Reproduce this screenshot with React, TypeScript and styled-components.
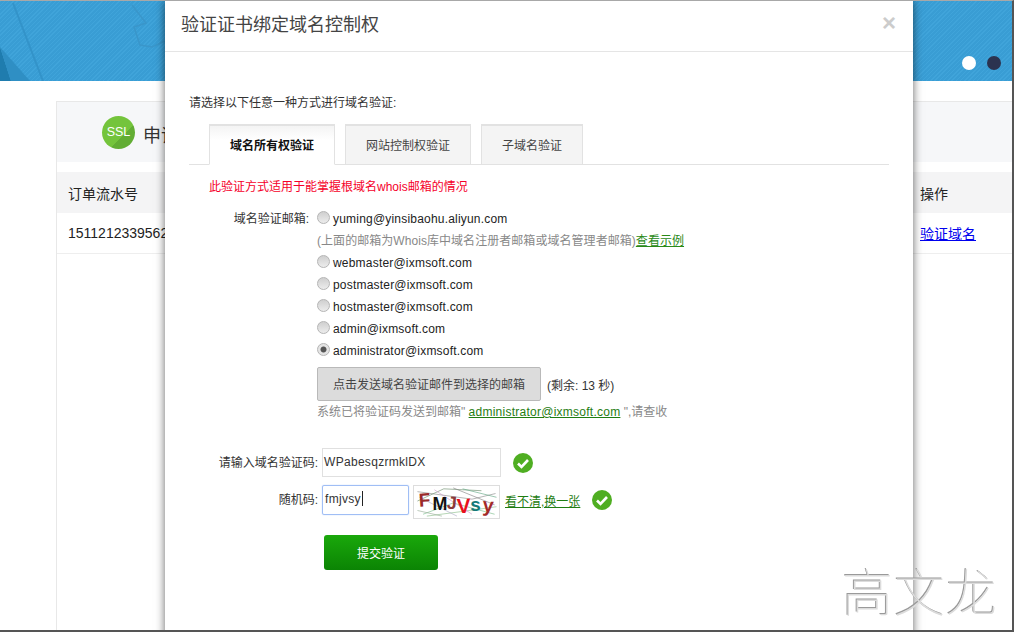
import React from 'react'
import styled, { createGlobalStyle } from 'styled-components'

const GlobalStyle = createGlobalStyle`
    html, body {
        margin: 0;
        padding: 0;
        background: #fff;
    }
    body {
        font-family: "Liberation Sans", Arial, "Noto Sans CJK SC", sans-serif;
        font-size: 12px;
        color: #333;
    }
    * { box-sizing: border-box; }
`

const Frame = styled.div`
    position: relative;
    width: 1014px;
    height: 632px;
    overflow: hidden;
    background: #fff;
    border-top: 1px solid #a8a8a8;
    border-right: 2px solid #555;
    border-bottom: 2px solid #555;
`

const Banner = styled.div`
    position: relative;
    height: 80px;
    overflow: hidden;
    background: repeating-linear-gradient(135deg, #40a4da 0 1px, #399dd4 1px 3px);
`

const BannerShade = styled.svg`
    position: absolute;
    left: 0;
    top: 0;
`

const Dots = styled.div`
    display: flex;
    justify-content: flex-end;
    gap: 11px;
    padding: 55px 11px 0 0;
`

const Dot = styled.span<{ dark?: boolean }>`
    position: relative;
    width: 14px;
    height: 14px;
    border-radius: 50%;
    background: ${props => props.dark ? '#2b3350' : '#fff'};
`

const Panel = styled.section`
    margin: 20px 0 0 56px;
    border: 1px solid #e8e8e8;
    border-right: none;
    border-bottom: none;
    height: 540px;
`

const PanelHead = styled.header`
    height: 60px;
    padding-left: 45px;
    display: flex;
    align-items: center;
    gap: 8px;
    background: #f6f7f9;
    font-size: 18px;
`

const PanelTitle = styled.span`
    margin-top: 3px;
`

const SslBadge = styled.span`
    width: 33px;
    height: 33px;
    border-radius: 50%;
    background: linear-gradient(135deg, #74c43c 62%, #62ad34 62%);
    color: #fff;
    font-size: 12.5px;
    line-height: 33px;
    text-align: center;
`

const TableRow = styled.div<{ head?: boolean }>`
    display: grid;
    grid-template-columns: 852px 1fr;
    align-items: center;
    padding-left: 11px;
    font-size: 14px;
    color: #222;
    height: 41px;
    margin-top: ${props => props.head ? '10px' : '0'};
    background: ${props => props.head ? '#f4f4f5' : '#fff'};
    border-bottom: ${props => props.head ? 'none' : '1px solid #eee'};
`

const TableLink = styled.a`
    color: #0000ee;
    text-decoration: underline;
`

const Modal = styled.div`
    position: absolute;
    left: 165px;
    top: 0;
    width: 748px;
    height: 640px;
    background: #fff;
    box-shadow: 0 0 9px rgba(0, 0, 0, .6);
`

const ModalHead = styled.div`
    height: 51px;
    padding: 0 17px 6px 16px;
    display: flex;
    align-items: center;
    justify-content: space-between;
    border-bottom: 1px solid #e5e5e5;
`

const ModalTitle = styled.h4`
    margin: 0;
    font-size: 18px;
    font-weight: 400;
    color: #444;
`

const Close = styled.span`
    font-size: 24px;
    font-weight: 700;
    line-height: 1;
    color: #ccc;
`

const ModalBody = styled.div`
    padding: 43px 24px 0;
`

const Intro = styled.p`
    margin: 0;
    height: 29px;
    line-height: 16px;
    color: #333;
`

const Tabs = styled.div`
    display: flex;
    gap: 10px;
    height: 41px;
    padding-left: 20px;
    border-bottom: 1px solid #e2e2e2;
`

const Tab = styled.div<{ active?: boolean; wide?: boolean }>`
    width: ${props => props.wide ? '126px' : '102px'};
    height: 41px;
    line-height: 41px;
    text-align: center;
    color: ${props => props.active ? '#111' : '#444'};
    font-weight: ${props => props.active ? 700 : 400};
    background: ${props => props.active ? 'linear-gradient(#f4f4f4, #fff 14px)' : '#f4f4f4'};
    border: 1px solid #e2e2e2;
    border-top: 2px solid #e2e2e2;
    border-bottom: ${props => props.active ? '1px solid #fff' : '1px solid #e2e2e2'};
`

const Warning = styled.p`
    margin: 0;
    padding-left: 20px;
    height: 43px;
    line-height: 45px;
    color: #f5002a;
`

const EmailGrid = styled.div`
    display: grid;
    grid-template-columns: 120px 1fr;
    column-gap: 8px;
`

const FieldLabel = styled.label`
    text-align: right;
    line-height: 22px;
    color: #333;
`

const EmailList = styled.div`
    display: flex;
    flex-direction: column;
`

const EmailRow = styled.div`
    display: flex;
    align-items: center;
    height: 22px;
    gap: 3px;
    color: #222;
    letter-spacing: .2px;
`

const Radio = styled.span<{ checked?: boolean }>`
    width: 13px;
    height: 13px;
    margin-top: -4px;
    border-radius: 50%;
    border: 1px solid #b5b5b5;
    background: ${props => props.checked
        ? 'radial-gradient(circle, #555 0 2.6px, #e4e4e4 3.4px)'
        : 'linear-gradient(#cfcfcf, #ececec)'};
`

const Hint = styled.div`
    height: 22px;
    line-height: 22px;
    color: #888;
    letter-spacing: .05px;
`

const HintLink = styled.a`
    color: #2a8a18;
    text-decoration: underline;
`

const SendRow = styled.div`
    display: flex;
    align-items: center;
    gap: 6px;
    margin-top: 5px;
    color: #333;
`

const SendButton = styled.button`
    width: 224px;
    height: 34px;
    padding: 0 0 2px;
    font: inherit;
    color: #444;
    background: #dcdcdc;
    border: 1px solid #b9b9b9;
    border-radius: 2px;
`

const Sent = styled.div`
    height: 22px;
    line-height: 22px;
    color: #888;
`

const SentLink = styled.a`
    color: #1f7d12;
    text-decoration: underline;
    letter-spacing: .25px;
`

const CodeRows = styled.div`
    display: flex;
    flex-direction: column;
    gap: 7px;
    margin-top: 25px;
`

const CodeRow = styled.div`
    display: flex;
    align-items: flex-start;
`

const CodeLabel = styled.label`
    width: 133px;
    text-align: right;
    line-height: 30px;
    color: #333;
    padding-right: 4px;
`

const TextBox = styled.div<{ focused?: boolean }>`
    width: ${props => props.focused ? '87px' : '179px'};
    height: ${props => props.focused ? '30px' : '29px'};
    line-height: 27px;
    padding-left: ${props => props.focused ? '2px' : '1px'};
    color: #333;
    letter-spacing: .3px;
    border: 1px solid ${props => props.focused ? '#a0bef5' : '#e0e0e0'};
    border-radius: ${props => props.focused ? '2px' : '0'};
    box-shadow: ${props => props.focused ? '0 0 1px #8fb2f2' : 'none'};
`

const Caret = styled.span`
    display: inline-block;
    width: 1px;
    height: 15px;
    margin-left: 1px;
    vertical-align: -3px;
    background: #222;
`

const CheckMark = styled.svg<{ gap: number }>`
    flex: none;
    margin: 5px 0 0 ${props => props.gap}px;
`

const Captcha = styled.svg`
    flex: none;
    margin-left: 4px;
    border: 1px solid #ddd;
`

const CaptchaLink = styled.a`
    margin-left: 5px;
    line-height: 34px;
    color: #1f7d12;
    text-decoration: underline;
`

const SubmitRow = styled.div`
    padding: 16px 0 0 135px;
`

const SubmitButton = styled.button`
    width: 114px;
    height: 35px;
    padding: 0;
    font: inherit;
    color: #fff;
    border: none;
    border-radius: 3px;
    background: linear-gradient(#1aa80b, #0b8404);
`

const Watermark = styled.div`
    position: absolute;
    left: 842px;
    top: 561px;
    font-family: "Noto Sans CJK SC", sans-serif;
    font-size: 51px;
    font-weight: 100;
    line-height: 56px;
    letter-spacing: 1px;
    color: #dcdcdc;
    text-shadow: -1px -1px 0 #9a9a9a;
`

const emails = [
    'webmaster@ixmsoft.com',
    'postmaster@ixmsoft.com',
    'hostmaster@ixmsoft.com',
    'admin@ixmsoft.com',
]

const captchaLetters = [
    { c: 'F', x: 4, y: 22, color: '#9a2a2a', size: 20, r: -4 },
    { c: 'M', x: 18, y: 26, color: '#111', size: 19, r: 0 },
    { c: 'J', x: 33, y: 24, color: '#8a3a3a', size: 19, r: 4 },
    { c: 'V', x: 44, y: 29, color: '#e8101c', size: 22, r: -2 },
    { c: 's', x: 58, y: 27, color: '#157a78', size: 20, r: 0 },
    { c: 'y', x: 71, y: 27, color: '#a32a2a', size: 21, r: 4 },
]

const captchaNoise = [
    { d: 'M2 6 L60 14 L85 8', color: '#8f8f8f' },
    { d: 'M8 30 L40 18 L84 30', color: '#7fbf8f' },
    { d: 'M2 16 L30 3 L70 5', color: '#6f8f6f' },
    { d: 'M12 32 L50 27 L86 22', color: '#8fc08f' },
    { d: 'M20 4 L60 30', color: '#d0a0d0' },
    { d: 'M40 2 L84 20', color: '#8a8a8a' },
    { d: 'M2 26 L28 32', color: '#9ab09a' },
    { d: 'M50 3 L86 12', color: '#66aa88' },
    { d: 'M4 12 L44 32', color: '#b0b0c8' },
]

const Check: React.FC<{ gap: number }> = ({ gap }) => (
    <CheckMark gap={gap} width="20" height="20" viewBox="0 0 20 20">
        <circle cx="10" cy="10" r="10" fill="#4fae22" />
        <path d="M5 10.5 L8.5 14 L15 7" fill="none" stroke="#fff" strokeWidth="2.6" />
    </CheckMark>
)

const App: React.FC = () => {
    return (
        <>
            <GlobalStyle />
            <Frame>
                <Banner>
                    <BannerShade width="170" height="80" viewBox="0 0 170 80">
                        <path d="M0 46 L11 80 L0 80 Z" fill="#1f7cae" />
                        <path d="M0 46 L30 80 L11 80 Z" fill="#2f8fc4" />
                        <path d="M13 2 L43 80" stroke="#3393c9" strokeWidth="2" fill="none" />
                        <path d="M132 4 L146 22 L134 26 L140 44 L152 46 L165 40" stroke="#3a96ca" strokeWidth="1.5" fill="none" />
                    </BannerShade>
                    <Dots>
                        <Dot />
                        <Dot dark />
                    </Dots>
                </Banner>
                <Panel>
                    <PanelHead>
                        <SslBadge>SSL</SslBadge>
                        <PanelTitle>申请</PanelTitle>
                    </PanelHead>
                    <TableRow head>
                        <span>订单流水号</span>
                        <span>操作</span>
                    </TableRow>
                    <TableRow>
                        <span>15112123395621</span>
                        <TableLink>验证域名</TableLink>
                    </TableRow>
                </Panel>
                <Modal>
                    <ModalHead>
                        <ModalTitle>验证证书绑定域名控制权</ModalTitle>
                        <Close>×</Close>
                    </ModalHead>
                    <ModalBody>
                        <Intro>请选择以下任意一种方式进行域名验证:</Intro>
                        <Tabs>
                            <Tab active wide>域名所有权验证</Tab>
                            <Tab wide>网站控制权验证</Tab>
                            <Tab>子域名验证</Tab>
                        </Tabs>
                        <Warning>此验证方式适用于能掌握根域名whois邮箱的情况</Warning>
                        <EmailGrid>
                            <FieldLabel>域名验证邮箱:</FieldLabel>
                            <EmailList>
                                <EmailRow><Radio />yuming@yinsibaohu.aliyun.com</EmailRow>
                                <Hint>(上面的邮箱为Whois库中域名注册者邮箱或域名管理者邮箱)<HintLink>查看示例</HintLink></Hint>
                                {emails.map(email => (
                                    <EmailRow key={email}><Radio />{email}</EmailRow>
                                ))}
                                <EmailRow><Radio checked />administrator@ixmsoft.com</EmailRow>
                                <SendRow>
                                    <SendButton>点击发送域名验证邮件到选择的邮箱</SendButton>
                                    <span>(剩余: 13 秒)</span>
                                </SendRow>
                                <Sent>系统已将验证码发送到邮箱" <SentLink>administrator@ixmsoft.com</SentLink> ",请查收</Sent>
                            </EmailList>
                        </EmailGrid>
                        <CodeRows>
                            <CodeRow>
                                <CodeLabel>请输入域名验证码:</CodeLabel>
                                <TextBox>WPabesqzrmklDX</TextBox>
                                <Check gap={12} />
                            </CodeRow>
                            <CodeRow>
                                <CodeLabel>随机码:</CodeLabel>
                                <TextBox focused>fmjvsy<Caret /></TextBox>
                                <Captcha width="87" height="34" viewBox="0 0 87 34">
                                    {captchaNoise.map(n => (
                                        <path key={n.d} d={n.d} fill="none" stroke={n.color} strokeWidth=".7" />
                                    ))}
                                    {captchaLetters.map(l => (
                                        <text key={l.c} x={l.x} y={l.y} fill={l.color} fontSize={l.size} fontWeight="700" fontFamily="Liberation Sans" transform={`rotate(${l.r} ${l.x} ${l.y})`}>{l.c}</text>
                                    ))}
                                </Captcha>
                                <CaptchaLink>看不清,换一张</CaptchaLink>
                                <Check gap={12} />
                            </CodeRow>
                        </CodeRows>
                        <SubmitRow>
                            <SubmitButton>提交验证</SubmitButton>
                        </SubmitRow>
                    </ModalBody>
                </Modal>
                <Watermark>高文龙</Watermark>
            </Frame>
        </>
    )
}

export default App
